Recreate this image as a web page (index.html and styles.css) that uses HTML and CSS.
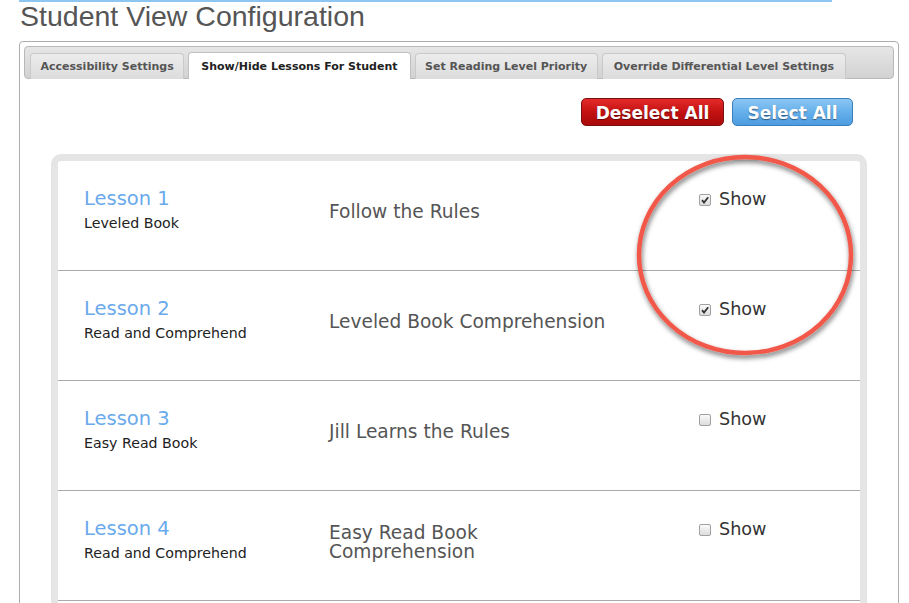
FILE: index.html
```html
<!DOCTYPE html>
<html>
<head>
<meta charset="utf-8">
<link rel="stylesheet" href="styles.css">
</head>
<body>
<div class="page">
  <div class="topline"></div>
  <h1 class="title">Student View Configuration</h1>
  <div class="panel">
    <div class="tabbar">
      <div class="tab">Accessibility Settings</div>
      <div class="tab active">Show/Hide Lessons For Student</div>
      <div class="tab">Set Reading Level Priority</div>
      <div class="tab">Override Differential Level Settings</div>
    </div>
    <div class="actions">
      <button class="btn btn-red">Deselect All</button>
      <button class="btn btn-blue">Select All</button>
    </div>
    <div class="lessons">
      <div class="row">
        <div class="col-name"><div class="lesson">Lesson 1</div><div class="sub">Leveled Book</div></div>
        <div class="col-title">Follow the Rules</div>
        <div class="col-show"><span class="box checked"><svg viewBox="0 0 12 12" width="12" height="12"><path d="M3 6.2 L5 8.6 L9.2 3.2" fill="none" stroke="#333" stroke-width="1.8"/></svg></span>Show</div>
      </div>
      <div class="row">
        <div class="col-name"><div class="lesson">Lesson 2</div><div class="sub">Read and Comprehend</div></div>
        <div class="col-title">Leveled Book Comprehension</div>
        <div class="col-show"><span class="box checked"><svg viewBox="0 0 12 12" width="12" height="12"><path d="M3 6.2 L5 8.6 L9.2 3.2" fill="none" stroke="#333" stroke-width="1.8"/></svg></span>Show</div>
      </div>
      <div class="row">
        <div class="col-name"><div class="lesson">Lesson 3</div><div class="sub">Easy Read Book</div></div>
        <div class="col-title">Jill Learns the Rules</div>
        <div class="col-show"><span class="box"></span>Show</div>
      </div>
      <div class="row">
        <div class="col-name"><div class="lesson">Lesson 4</div><div class="sub">Read and Comprehend</div></div>
        <div class="col-title">Easy Read Book Comprehension</div>
        <div class="col-show"><span class="box"></span>Show</div>
      </div>
      <div class="row row-empty"></div>
    </div>
  </div>
  <svg class="circle" width="240" height="230" viewBox="0 0 240 230">
    <defs>
      <filter id="sh" x="-10%" y="-10%" width="120%" height="120%">
        <feDropShadow dx="1" dy="3" stdDeviation="2.5" flood-color="#000" flood-opacity="0.55"/>
      </filter>
    </defs>
    <ellipse cx="118" cy="105" rx="106" ry="98" fill="none" stroke="#f25848" stroke-width="4.5" filter="url(#sh)"/>
  </svg>
</div>
</body>
</html>
```
FILE: styles.css
```css
html, body {
  margin: 0;
  padding: 0;
  background: #fff;
  overflow: hidden;
}
.page {
  position: relative;
  padding-left: 19px;
  font-family: "DejaVu Sans", Verdana, sans-serif;
}
.topline {
  width: 813px;
  height: 2px;
  background: #8ec6f2;
}
.title {
  margin: 0;
  padding-left: 1px;
  font-family: "Liberation Sans", Arial, sans-serif;
  font-weight: normal;
  font-size: 28.5px;
  line-height: 29px;
  color: #555;
}
.panel {
  margin-top: 10px;
  width: 870px;
  height: 700px;
  border: 1px solid #acacac;
  border-radius: 4px;
  padding: 4px;
}
.tabbar {
  display: flex;
  align-items: flex-end;
  gap: 4px;
  height: 33px;
  box-sizing: border-box;
  padding: 0 5px;
  border: 1px solid #b8b8b8;
  border-radius: 4px;
  background: linear-gradient(#e6e6e6, #d2d2d2);
}
.tab {
  height: 26px;
  box-sizing: border-box;
  padding: 0 9.5px;
  display: flex;
  align-items: center;
  font-weight: bold;
  font-size: 11px;
  color: #555;
  border: 1px solid #c9c9c9;
  border-bottom: none;
  border-radius: 4px 4px 0 0;
  background: linear-gradient(#ececec, #dcdcdc);
  margin-bottom: -1px;
}
.tab.active {
  background: #fff;
  color: #222;
  height: 27px;
  padding: 0 12px;
  border-color: #c0c0c0;
}
.tab:last-child {
  padding: 0 11px;
}
.actions {
  display: flex;
  justify-content: flex-end;
  gap: 8px;
  padding-right: 41px;
  margin-top: 19px;
}
.btn {
  height: 28px;
  box-sizing: border-box;
  border-radius: 5px;
  font-family: "DejaVu Sans", Verdana, sans-serif;
  font-weight: bold;
  font-size: 17px;
  color: #fff;
  text-shadow: 0 1px 1px rgba(0,0,0,0.45);
  padding: 2px 0 0;
  cursor: pointer;
}
.btn-red {
  width: 143px;
  border: 1px solid #7a1010;
  background: linear-gradient(#e42a2a, #c01010 55%, #a90a0a);
}
.btn-blue {
  width: 121px;
  border: 1px solid #3a7fb8;
  background: linear-gradient(#8cc6f4, #62aeea 55%, #4e9ce0);
}
.lessons {
  margin: 28px 27px 0 27px;
  border: 7px solid #e5e5e5;
  border-radius: 10px;
  background: #fff;
}
.row {
  display: flex;
  align-items: center;
  border-bottom: 1px solid #aaa;
  padding: 0 0 8px 26px;
  height: 101px;
}
.row-empty {
  border-bottom: none;
}
.col-name {
  flex: 0 0 245px;
  align-self: flex-start;
  padding-top: 26px;
}
.lesson {
  font-size: 19.5px;
  line-height: 24px;
  color: #6aaaec;
}
.sub {
  margin-top: 3px;
  font-size: 14.2px;
  line-height: 18px;
  color: #222;
}
.col-title {
  flex: 0 0 290px;
  font-size: 18.6px;
  line-height: 19px;
  color: #555;
}
.col-show {
  align-self: flex-start;
  margin-left: 80px;
  padding-top: 27px;
  display: flex;
  align-items: center;
  font-size: 17.6px;
  line-height: 22px;
  color: #333;
}
.box {
  width: 12px;
  height: 12px;
  box-sizing: border-box;
  margin-right: 8px;
  border: 1px solid #a0a0a0;
  border-radius: 2px;
  background: linear-gradient(#fafafa, #dcdcdc);
  display: inline-flex;
  position: relative;
  top: 1px;
}
.box svg {
  position: absolute;
  left: -1px;
  top: -1px;
}
.circle {
  position: absolute;
  left: 627px;
  top: 150px;
}
```
